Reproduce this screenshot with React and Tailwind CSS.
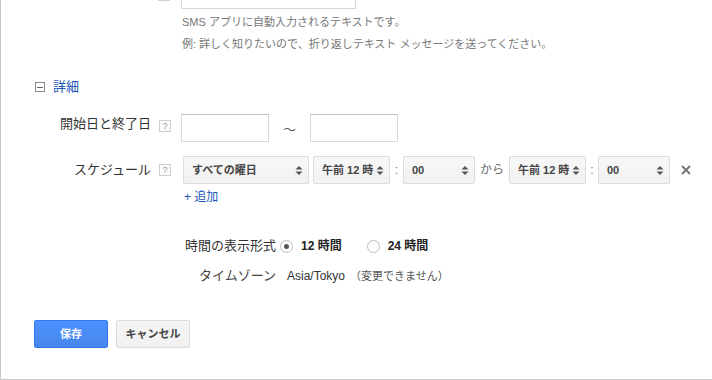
const font = { fontFamily: '"Liberation Sans", "Noto Sans CJK JP", sans-serif' };

const HelpIcon = ({ mark = true }) => (
    <span className="inline-flex items-center justify-center w-[12px] h-[12px] border border-[#d0d0d0] bg-[#fafafa] text-[9px] leading-none text-[#999]">{mark ? '?' : ''}</span>
);

const Caret = () => (
    <svg width="8" height="11" viewBox="0 0 8 11" className="shrink-0">
        <path d="M0.5 4.5 L4 1 L7.5 4.5 Z" fill="#555" />
        <path d="M0.5 6.5 L4 10 L7.5 6.5 Z" fill="#555" />
    </svg>
);

const Select = ({ label, width }) => (
    <div
        className={`flex items-center justify-between h-[28px] pl-[8px] pr-[5px] rounded-[2px] border border-[#dcdcdc] bg-gradient-to-b from-[#f8f8f8] to-[#f1f1f1] text-[11px] font-bold text-[#444] ${width}`}
    >
        <span>{label}</span>
        <Caret />
    </div>
);

const Radio = ({ checked }) => (
    <span className="inline-flex items-center justify-center w-[13px] h-[13px] rounded-full border border-[#bbb] bg-white">
        {checked && <span className="w-[5px] h-[5px] rounded-full bg-[#555]" />}
    </span>
);

const App = () => {
    return (
        <div style={font} className="w-[712px] h-[380px] bg-white border-l border-b border-[#c8c8c8] overflow-hidden text-[#333]">
            {/* top field (cut off) */}
            <div className="flex items-center -mt-[19px] h-[28px]">
                <div className="w-[157px]" />
                <HelpIcon mark={false} />
                <div className="ml-[11px] w-[175px] h-[28px] border border-[#d9d9d9] border-t-[#c0c0c0] bg-white" />
            </div>
            <div className="ml-[181px] mt-[4px] h-[18px] flex items-center text-[11px] text-[#777]">
                SMS アプリに自動入力されるテキストです。
            </div>
            <div className="ml-[181px] mt-[4px] h-[18px] flex items-center text-[11px] text-[#777]">
                例: 詳しく知りたいので、折り返しテキスト メッセージを送ってください。
            </div>

            {/* details toggle */}
            <div className="ml-[34px] mt-[24px] h-[20px] flex items-center gap-[8px]">
                <span className="relative w-[10px] h-[10px] border border-[#888] flex items-center justify-center">
                    <span className="w-[6px] h-[1px] bg-[#666]" />
                </span>
                <span className="text-[13px] text-[#1a55b8]">詳細</span>
            </div>

            {/* date range */}
            <div className="flex items-center mt-[17px] h-[28px]">
                <div className="w-[150px] text-right text-[13px] -mt-[8px]">開始日と終了日</div>
                <div className="ml-[8px] -mt-[4px] flex"><HelpIcon /></div>
                <div className="ml-[10px] w-[88px] h-[28px] border border-[#d9d9d9] border-t-[#c0c0c0] bg-white" />
                <span className="w-[41px] text-center text-[13px] text-[#555] mt-[4px]">～</span>
                <div className="w-[88px] h-[28px] border border-[#d9d9d9] border-t-[#c0c0c0] bg-white" />
            </div>

            {/* schedule */}
            <div className="flex items-center mt-[14px] h-[28px]">
                <div className="w-[150px] text-right text-[13px]">スケジュール</div>
                <div className="ml-[8px] flex"><HelpIcon /></div>
                <div className="ml-[12px] flex items-center">
                    <Select label="すべての曜日" width="w-[126px]" />
                    <div className="ml-[4px]"><Select label="午前 12 時" width="w-[77px]" /></div>
                    <span className="w-[13px] text-center text-[12px] text-[#777]">:</span>
                    <Select label="00" width="w-[72px]" />
                    <span className="w-[34px] text-center text-[12px] text-[#666]">から</span>
                    <Select label="午前 12 時" width="w-[77px]" />
                    <span className="w-[12px] text-center text-[12px] text-[#777]">:</span>
                    <Select label="00" width="w-[72px]" />
                    <svg width="10" height="10" viewBox="0 0 10 10" className="ml-[11px]">
                        <path d="M1 1 L9 9 M9 1 L1 9" stroke="#777" strokeWidth="2" />
                    </svg>
                </div>
            </div>
            <div className="ml-[183px] mt-[4px] h-[18px] flex items-center text-[12px] text-[#1a55b8]">+ 追加</div>

            {/* time format */}
            <div className="ml-[183px] mt-[30px] h-[20px] flex items-center text-[13px]">
                <span className="w-[92px] text-right">時間の表示形式</span>
                <span className="ml-[4px] flex"><Radio checked /></span>
                <span className="ml-[8px] font-bold text-[12px] text-[#222]">12 時間</span>
                <span className="ml-[25px] flex"><Radio /></span>
                <span className="ml-[8px] font-bold text-[12px] text-[#222]">24 時間</span>
            </div>

            {/* time zone */}
            <div className="ml-[183px] mt-[10px] h-[20px] flex items-center text-[13px]">
                <span className="w-[92px] text-right text-[#444]">タイムゾーン</span>
                <span className="ml-[11px] text-[12px] text-[#333]">Asia/Tokyo</span>
                <span className="ml-[5px] text-[11px] text-[#555]">（変更できません）</span>
            </div>

            {/* actions */}
            <div className="ml-[33px] mt-[34px] flex items-center gap-[8px]">
                <button className="w-[74px] h-[28px] rounded-[2px] border border-[#3079ed] bg-gradient-to-b from-[#4d90fe] to-[#4787ed] text-white text-[11px] font-bold">
                    保存
                </button>
                <button className="w-[74px] h-[28px] rounded-[2px] border border-[#dcdcdc] bg-gradient-to-b from-[#f5f5f5] to-[#f1f1f1] text-[#444] text-[11px] font-bold">
                    キャンセル
                </button>
            </div>
        </div>
    );
};

export default App;
